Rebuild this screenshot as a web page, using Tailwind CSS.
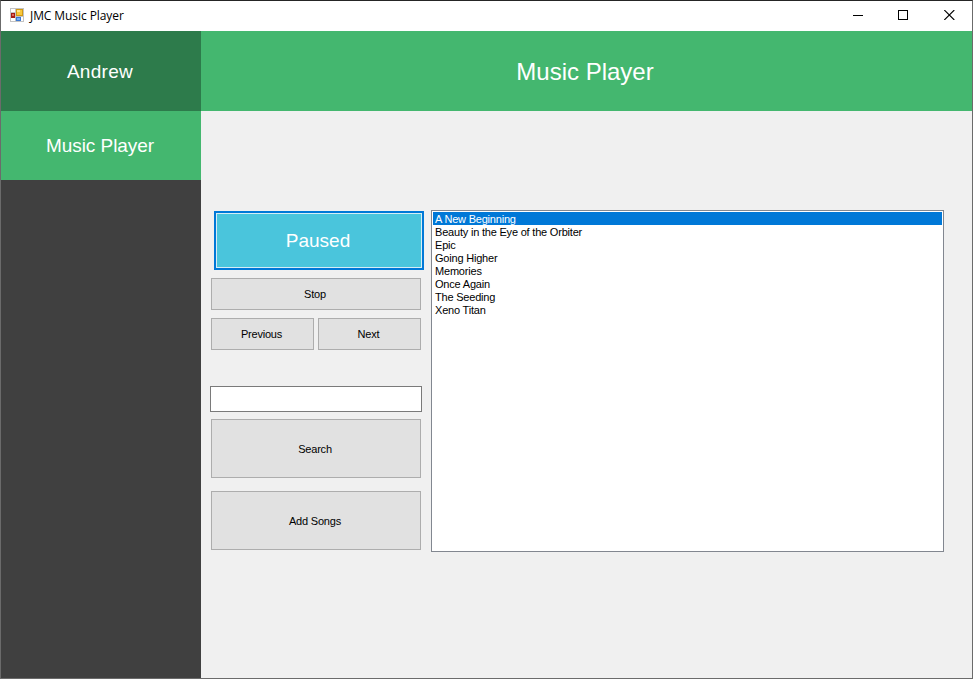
<!DOCTYPE html>
<html lang="en">
<head>
<meta charset="utf-8">
<title>JMC Music Player</title>
<script src="https://cdn.jsdelivr.net/npm/@tailwindcss/browser@4"></script>
</head>
<body class="h-[679px] w-[973px] overflow-hidden font-['Liberation_Sans',Arial,sans-serif]">
<div class="flex h-full w-full flex-col border border-[#6b6b6b] border-t-[#252525] bg-[#f0f0f0]">
  <header class="flex h-[30px] shrink-0 items-center bg-white pl-[9px]">
    <svg class="mb-[2px] h-[14px] w-[14px]" viewBox="0 0 14 14" shape-rendering="crispEdges">
      <rect width="14" height="14" fill="#c3c3c3"/>
      <rect x="1" y="1" width="4" height="3" fill="#fff"/>
      <rect x="1" y="10" width="4" height="3" fill="#fff"/>
      <rect x="11" y="9" width="2" height="4" fill="#fff"/>
      <rect x="1" y="5" width="4" height="5" fill="#a51c14"/>
      <rect x="2" y="6" width="2" height="2" fill="#e0685c"/>
      <rect x="6" y="1" width="7" height="7" fill="#d29a12"/>
      <rect x="7" y="2" width="5" height="5" fill="#f8c83c"/>
      <rect x="7" y="2" width="3" height="2" fill="#ffe48c"/>
      <rect x="6" y="9" width="5" height="4" fill="#3c78d2"/>
      <rect x="7" y="10" width="3" height="2" fill="#78b0f4"/>
    </svg>
    <h1 class="ml-[6px] font-['Open_Sans',sans-serif] text-[12px] leading-[16px] tracking-[-0.08px] text-black">JMC Music Player</h1>
    <div class="ml-auto flex h-full pb-[2px]">
      <div class="flex w-[46px] items-center justify-center"><svg class="h-[10px] w-[10px]" viewBox="0 0 10 10" shape-rendering="crispEdges"><rect y="5" width="10" height="1"/></svg></div>
      <div class="flex w-[44px] items-center justify-center"><svg class="h-[10px] w-[10px]" viewBox="0 0 10 10"><rect x=".5" y=".5" width="9" height="9" fill="none" stroke="#000"/></svg></div>
      <div class="flex w-[47px] items-center justify-center pl-[2px]"><svg class="h-[10px] w-[11px]" viewBox="0 0 11 10"><path d="M.3 0L10.3 10M10.3 0L.3 10" stroke="#000" stroke-width="1.1"/></svg></div>
    </div>
  </header>
  <div class="flex min-h-0 flex-1">
    <aside class="w-[200px] shrink-0 bg-[#404040] text-[19px] text-white">
      <div class="flex h-[80px] items-center justify-center bg-[#2d7b4b] pt-[2px] pr-[2px] tracking-[0.3px]">Andrew</div>
      <div class="flex h-[69px] items-center justify-center bg-[#44b76f] pt-[2px] pr-[2px] tracking-[-0.05px]">Music Player</div>
    </aside>
    <main class="flex flex-1 flex-col">
      <div class="flex h-[80px] shrink-0 items-center justify-center bg-[#44b76f] pt-[2px] pr-[3px] text-[24px] text-white">Music Player</div>
      <div class="mt-[99px] flex text-[11px] tracking-[-0.2px] text-black">
        <section class="ml-[9px] flex w-[212px] flex-col px-px pt-px">
          <button class="ml-[3px] h-[59px] w-[210px] shrink-0 border-2 border-[#0078d7] bg-[#4ac5dc] pt-[2px] pr-[2px] text-[19px] tracking-normal text-white inset-ring inset-ring-[#d5edf5]">Paused</button>
          <button class="mt-[8px] h-[32px] border border-[#adadad] bg-[#e1e1e1] pr-[2px]">Stop</button>
          <div class="mt-[8px] flex gap-[4px]">
            <button class="h-[32px] w-[103px] border border-[#adadad] bg-[#e1e1e1] pr-[2px]">Previous</button>
            <button class="h-[32px] w-[103px] border border-[#adadad] bg-[#e1e1e1] pr-[2px]">Next</button>
          </div>
          <input type="text" aria-label="Search songs" class="-mx-px mt-[36px] h-[26px] border border-[#7a7a7a] bg-white px-1">
          <button class="mt-[7px] h-[59px] border border-[#adadad] bg-[#e1e1e1] pt-[2px] pr-[2px]">Search</button>
          <button class="mt-[13px] h-[59px] border border-[#adadad] bg-[#e1e1e1] pt-[2px] pr-[2px]">Add Songs</button>
        </section>
        <ul class="ml-[9px] h-[342px] w-[513px] border border-[#828790] bg-white p-px leading-[13px]">
          <li class="h-[13px] bg-[#0078d7] pt-px pl-[2px] text-white">A New Beginning</li>
          <li class="h-[13px] pt-px pl-[2px]">Beauty in the Eye of the Orbiter</li>
          <li class="h-[13px] pt-px pl-[2px]">Epic</li>
          <li class="h-[13px] pt-px pl-[2px]">Going Higher</li>
          <li class="h-[13px] pt-px pl-[2px]">Memories</li>
          <li class="h-[13px] pt-px pl-[2px]">Once Again</li>
          <li class="h-[13px] pt-px pl-[2px]">The Seeding</li>
          <li class="h-[13px] pt-px pl-[2px]">Xeno Titan</li>
        </ul>
      </div>
    </main>
  </div>
</div>
</body>
</html>
